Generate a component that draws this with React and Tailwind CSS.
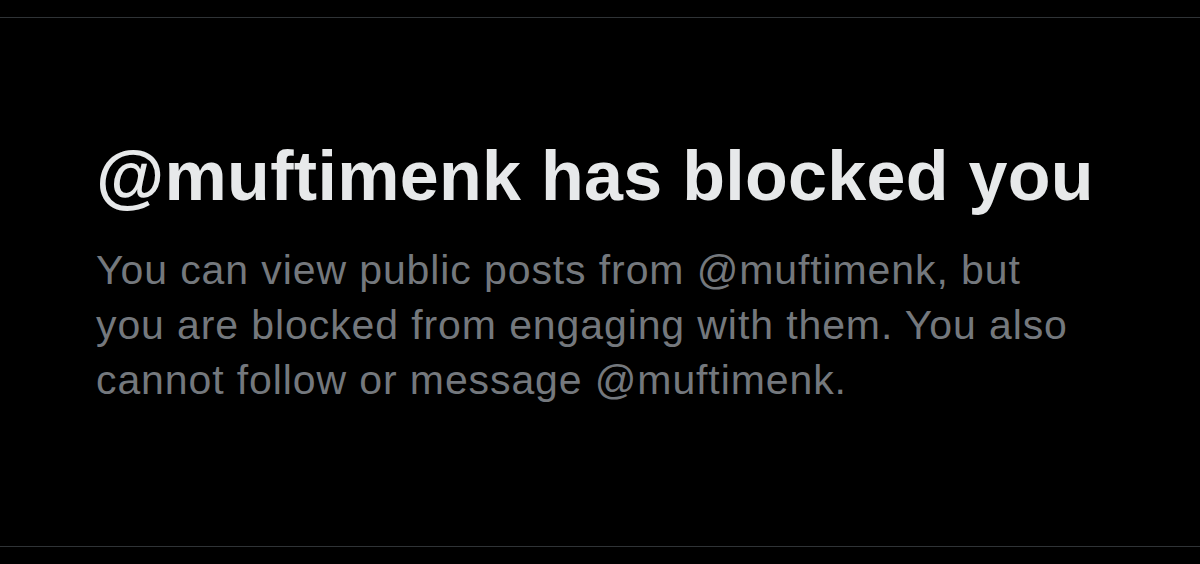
import React from 'react';

const BlockedNotice = ({ handle }) => {
  const title = `@${handle} has blocked you`;
  const body = `You can view public posts from @${handle}, but you are blocked from engaging with them. You also cannot follow or message @${handle}.`;
  return (
    <div className="pl-[96px] pt-[116px]">
      <h1 className="text-[70px] leading-[84px] font-bold text-[#e7e9ea] tracking-[0.3px]">
        {title}
      </h1>
      <p className="mt-[25px] w-[985px] text-[41px] leading-[55px] text-[#74787d] tracking-[0.9px]">
        {body}
      </p>
    </div>
  );
};

export default function App() {
  return (
    <div
      className="h-[564px] w-[1200px] bg-black pt-[17px] overflow-hidden"
      style={{ fontFamily: '"Liberation Sans", Arial, sans-serif' }}
    >
      <div className="h-[530px] border-y border-[#2f3336]">
        <BlockedNotice handle="muftimenk" />
      </div>
    </div>
  );
}
